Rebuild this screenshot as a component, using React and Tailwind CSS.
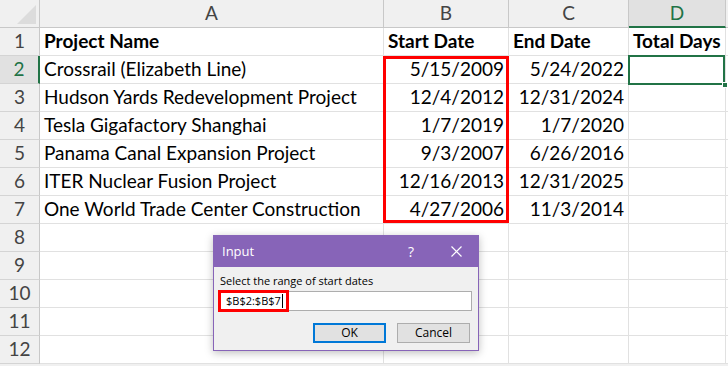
import React from 'react';

const rows = [
  ['Project Name', 'Start Date', 'End Date', 'Total Days'],
  ['Crossrail (Elizabeth Line)', '5/15/2009', '5/24/2022', ''],
  ['Hudson Yards Redevelopment Project', '12/4/2012', '12/31/2024', ''],
  ['Tesla Gigafactory Shanghai', '1/7/2019', '1/7/2020', ''],
  ['Panama Canal Expansion Project', '9/3/2007', '6/26/2016', ''],
  ['ITER Nuclear Fusion Project', '12/16/2013', '12/31/2025', ''],
  ['One World Trade Center Construction', '4/27/2006', '11/3/2014', ''],
  ['', '', '', ''],
  ['', '', '', ''],
  ['', '', '', ''],
  ['', '', '', ''],
  ['', '', '', ''],
];

const cols = [
  { key: 'A', w: 'w-[344px]' },
  { key: 'B', w: 'w-[125px]' },
  { key: 'C', w: 'w-[120px]' },
  { key: 'D', w: 'w-[97px]' },
];

const InputDialog = () => (
  <div className="absolute left-[213px] top-[235px] w-[266px] h-[116px] border border-[#8764b8] bg-[#f0f0f0] shadow-[0_2px_8px_rgba(0,0,0,0.25)] flex flex-col font-['Open_Sans',sans-serif]">
    <div className="h-[31px] bg-[#8764b8] flex items-center pl-[8px] text-white text-[13px] shrink-0">
      <span className="flex-1">Input</span>
      <span className="w-[20px] text-center mr-[30px] text-[14px]">?</span>
      <svg width="11" height="11" viewBox="0 0 11 11" className="mr-[16px]">
        <path d="M0.5 0.5 L10.5 10.5 M10.5 0.5 L0.5 10.5" stroke="white" strokeWidth="1.2" />
      </svg>
    </div>
    <div className="flex flex-col px-[4px] pt-[7px]">
      <div className="text-[11px] text-black leading-[14px] pl-[2px]">Select the range of start dates</div>
      <div className="relative mt-[3px] h-[20px] w-[254px] border border-[#adadad] bg-white flex items-center pl-[7px] text-[11px] text-black">
        <span>$B$2:$B$7</span>
        <span className="w-px h-[14px] bg-black ml-[1px]" />
        <div className="absolute left-[-1px] top-[-2px] w-[71px] h-[22px] border-[3px] border-[#ff0000]" />
      </div>
      <div className="flex justify-end gap-[11px] mt-[12px] pr-[4px]">
        <button className="w-[73px] h-[20px] border-2 border-[#0078d7] bg-[#e1e1e1] text-[12px] text-black flex items-center justify-center">OK</button>
        <button className="w-[73px] h-[20px] border border-[#adadad] bg-[#e1e1e1] text-[12px] text-black flex items-center justify-center">Cancel</button>
      </div>
    </div>
  </div>
);

export default function App() {
  return (
    <div className="relative w-[728px] h-[366px] overflow-hidden bg-[#f0f0f0] font-['Lato',sans-serif] text-black">
      {/* column headers */}
      <div className="flex h-[28px]">
        <div className="w-[40px] h-[28px] bg-[#f0f0f0] border-r border-b border-[#c8c8c8] relative shrink-0">
          <svg width="20" height="20" className="absolute left-[17px] top-[5px]">
            <polygon points="19,0 19,19 0,19" fill="#dcdcdc" />
          </svg>
        </div>
        {cols.map((c) => (
          <div
            key={c.key}
            className={
              c.w +
              ' shrink-0 h-[28px] flex items-center justify-center text-[19px] border-r ' +
              (c.key === 'D'
                ? 'bg-[#e1e1e1] text-[#217346] border-b-2 border-b-[#217346] border-r-[#c8c8c8]'
                : 'bg-[#f0f0f0] text-[#444] border-b border-[#c8c8c8]')
            }
          >
            {c.key}
          </div>
        ))}
        <div className="flex-1 h-[28px] bg-[#f0f0f0] border-b border-[#c8c8c8]" />
      </div>

      {rows.map((r, i) => (
        <div key={i} className="flex h-[28px]">
          <div
            className={
              'w-[40px] shrink-0 h-[28px] flex items-center justify-center text-[19px] border-b border-b-[#d4d4d4] ' +
              (i === 1
                ? 'bg-[#e1e1e1] text-[#217346] border-r-2 border-r-[#217346]'
                : 'bg-[#f0f0f0] text-[#444] border-r border-r-[#c8c8c8]')
            }
          >
            {i + 1}
          </div>
          {cols.map((c, j) => (
            <div
              key={c.key}
              className={
                c.w +
                ' shrink-0 h-[28px] flex items-center bg-white border-r border-b border-[#e1e1e1] text-[19px] whitespace-nowrap overflow-visible ' +
                (i === 0 ? 'font-bold px-[4px] ' : j === 0 ? 'px-[4px] ' : 'justify-end px-[4px] ')
              }
            >
              {r[j]}
            </div>
          ))}
          <div className="flex-1 h-[28px] bg-white border-b border-[#e1e1e1]" />
        </div>
      ))}

      {/* selected cell D2 */}
      <div className="absolute left-[628px] top-[55px] w-[97px] h-[30px] border-2 border-[#217346]" />
      <div className="absolute left-[722px] top-[82px] w-[6px] h-[6px] bg-[#217346] border border-white" />

      {/* highlighted start dates */}
      <div className="absolute left-[383px] top-[56px] w-[126px] h-[167px] border-[3px] border-[#ff0000]" />

      <InputDialog />
    </div>
  );
}
